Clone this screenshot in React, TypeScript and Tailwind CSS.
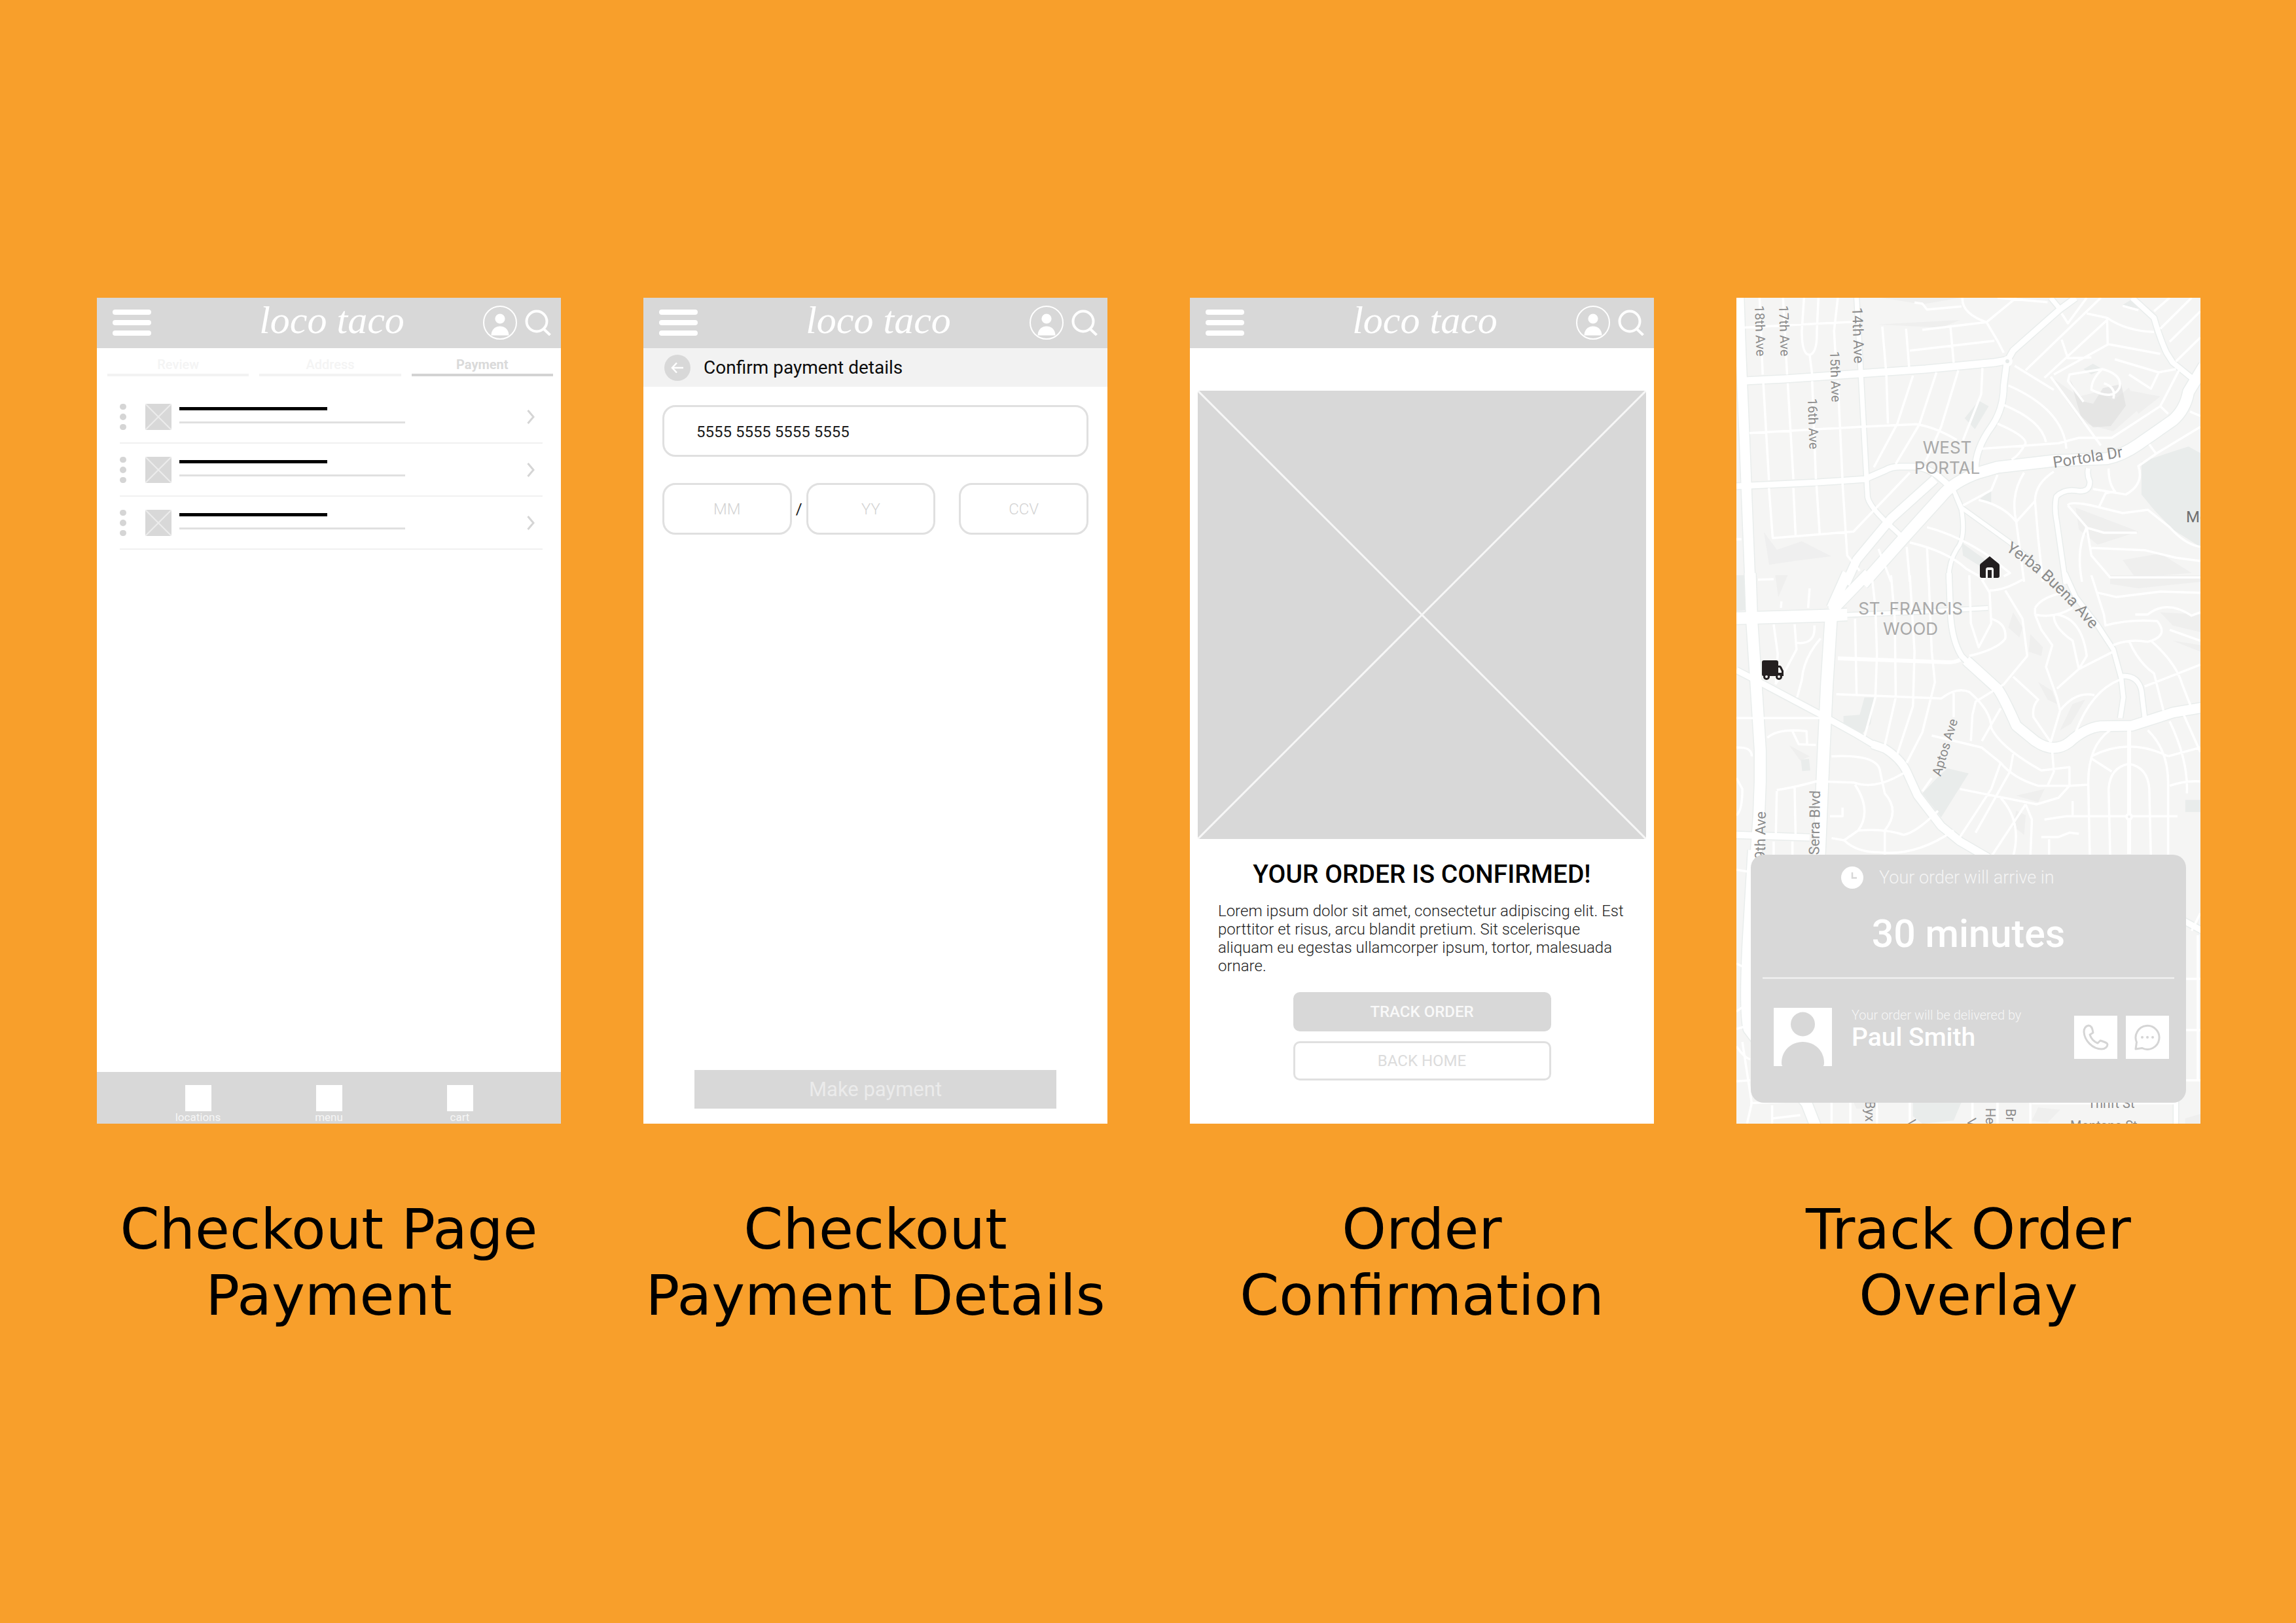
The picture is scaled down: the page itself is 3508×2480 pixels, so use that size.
import React from 'react';

/* ---------- shared pieces ---------- */

function UserIcon() {
  return (
    <svg viewBox="0 0 52 52" className="size-[52px]" aria-hidden="true">
      <circle cx="26" cy="26" r="25" fill="none" stroke="#fff" strokeWidth="2" />
      <circle cx="26" cy="20" r="7.6" fill="#fff" />
      <path d="M12.5 45.5C12.5 37 18.5 31.5 26 31.5S39.5 37 39.5 45.5Z" fill="#fff" />
    </svg>
  );
}

function SearchIcon() {
  return (
    <svg viewBox="0 0 40 40" className="size-10" fill="none" stroke="#fff" strokeWidth="4" aria-hidden="true">
      <circle cx="18" cy="18" r="15.5" />
      <path d="M28 29L38.500 39" />
    </svg>
  );
}

function Header() {
  return (
    <header className="grid h-[77px] shrink-0 grid-cols-[1fr_auto_1fr] items-center bg-[#d8d8d8] pl-6 pr-[15px] pb-0.5">
      <button aria-label="Open menu" className="flex w-[59px] flex-col gap-2">
        <span className="h-2 w-full rounded-sm bg-white" />
        <span className="h-2 w-full rounded-sm bg-white" />
        <span className="h-2 w-full rounded-sm bg-white" />
      </button>
      <a
        href="#home"
        className="self-start font-['Liberation_Serif',serif] text-[60px] leading-[68px] text-white italic"
      >
        loco taco
      </a>
      <div className="flex items-center gap-3 justify-self-end">
        <button aria-label="Account">
          <UserIcon />
        </button>
        <button aria-label="Search">
          <SearchIcon />
        </button>
      </div>
    </header>
  );
}

function Phone({ children, caption }: { children: React.ReactNode; caption: [string, string] }) {
  return (
    <figure className="min-w-0 flex-1">
      <div className="relative flex aspect-[709/1262] w-full flex-col overflow-hidden bg-white font-[Roboto,sans-serif]">
        {children}
      </div>
      <figcaption className="mt-[111px] text-center font-['DejaVu_Sans',sans-serif] text-[86px] leading-[101px] whitespace-nowrap text-black">
        {caption[0]}
        <br />
        {caption[1]}
      </figcaption>
    </figure>
  );
}

function Crossed({ stroke, width }: { stroke: string; width: number }) {
  return (
    <svg viewBox="0 0 100 100" preserveAspectRatio="none" className="size-full bg-[#d8d8d8]" aria-hidden="true">
      <path d="M0 0L100 100M100 0L0 100" stroke={stroke} strokeWidth={width} vectorEffect="non-scaling-stroke" />
    </svg>
  );
}

/* ---------- screen 1: payment methods ---------- */

function PaymentRow() {
  return (
    <li className="flex h-[81px] items-start border-b-2 border-[#f0f0f0] pt-5">
      <button aria-label="Options" className="flex h-10 flex-col items-center justify-center gap-1.5">
        <span className="size-2.5 rounded-full bg-[#d5d5d5]" />
        <span className="size-2.5 rounded-full bg-[#d5d5d5]" />
        <span className="size-2.5 rounded-full bg-[#d5d5d5]" />
      </button>
      <div className="ml-[29px] size-10">
        <Crossed stroke="#ececec" width={2} />
      </div>
      <div className="ml-3 flex flex-1 flex-col gap-[17px] pt-[5px]">
        <div className="h-[5px] w-[226px] bg-black" />
        <div className="h-[3px] w-[345px] bg-[#e0e0e0]" />
      </div>
      <button aria-label="Open" className="mr-3 pt-[9px]">
        <svg viewBox="0 0 12 22" className="h-[22px] w-3" fill="none" stroke="#d5d5d5" strokeWidth="3" aria-hidden="true">
          <path d="M1.500 1L10 11L1.500 21" />
        </svg>
      </button>
    </li>
  );
}

function PaymentScreen() {
  return (
    <>
      <Header />
      <nav className="grid grid-cols-3 gap-4 pt-[11px] pr-3 pl-4 text-center text-xl leading-7 font-bold">
        <a href="#review" className="border-b-4 border-[#f3f3f3] font-medium text-[#f4f4f4]">Review</a>
        <a href="#address" className="border-b-4 border-[#f3f3f3] font-medium text-[#f4f4f4]">Address</a>
        <a href="#payment" className="border-b-4 border-[#d3d3d3] text-[#dadada]">Payment</a>
      </nav>
      <ul className="mt-[22px] flex-1 pr-7 pl-[35px]">
        <PaymentRow />
        <PaymentRow />
        <PaymentRow />
      </ul>
      <nav className="flex h-[79px] shrink-0 justify-center bg-[#d8d8d8] pt-5">
        {['locations', 'menu', 'cart'].map((label) => (
          <a key={label} href={'#' + label} className="flex w-[200px] flex-col items-center text-[17px] leading-[19px] text-[#f6f6f6]">
            <span className="size-10 shrink-0 bg-white" />
            {label}
          </a>
        ))}
      </nav>
    </>
  );
}

/* ---------- screen 2: card details ---------- */

function DetailsScreen() {
  const small =
    'h-[79px] w-full min-w-0 flex-1 rounded-[20px] border-[3px] border-[#e0e0e0] bg-white text-center text-2xl font-light text-[#1c1c1c] placeholder:text-[#d3d3d3]';
  return (
    <>
      <Header />
      <div className="flex h-[59px] shrink-0 items-center gap-5 bg-[#f2f2f2] pl-8">
        <button aria-label="Back" className="flex size-10 items-center justify-center rounded-full bg-[#d8d8d8]">
          <svg viewBox="0 0 20 18" className="h-[18px] w-5" fill="none" stroke="#fff" strokeWidth="2.500" aria-hidden="true">
            <path d="M19 9H3M9 1.500L2 9L9 16.500" />
          </svg>
        </button>
        <h2 className="text-[28px] leading-8 text-[#0c0c0c]">Confirm payment details</h2>
      </div>
      <form className="flex flex-1 flex-col px-[29px] pt-7 pb-[23px]">
        <input
          aria-label="Card number"
          defaultValue="5555 5555 5555 5555"
          className="h-[79px] w-full rounded-[20px] border-[3px] border-[#e0e0e0] bg-white pt-0.5 pl-[49px] text-2xl text-[#1c1c1c]"
        />
        <div className="mt-10 flex items-center">
          <input aria-label="Expiry month" placeholder="MM" className={small} />
          <span className="w-[22px] text-center text-2xl text-[#1c1c1c]">/</span>
          <input aria-label="Expiry year" placeholder="YY" className={small} />
          <span className="w-9" />
          <input aria-label="CCV" placeholder="CCV" className={small} />
        </div>
        <button type="button" className="mt-auto h-[59px] w-[553px] self-center bg-[#d8d8d8] text-[31px] leading-[59px] text-[#ebebeb]">
          Make payment
        </button>
      </form>
    </>
  );
}

/* ---------- screen 3: confirmation ---------- */

function ConfirmedScreen() {
  return (
    <>
      <Header />
      <div className="mx-3 mt-[65px] aspect-square">
        <Crossed stroke="#f7f7f7" width={3} />
      </div>
      <h2 className="mt-[30px] text-center text-[39px] leading-[48px] font-medium text-black">YOUR ORDER IS CONFIRMED!</h2>
      <p className="mt-[18px] mr-10 ml-[43px] text-2xl leading-7 font-light text-[#222]">
        Lorem ipsum dolor sit amet, consectetur adipiscing elit. Est porttitor et risus, arcu blandit pretium. Sit
        scelerisque aliquam eu egestas ullamcorper ipsum, tortor, malesuada ornare.
      </p>
      <button className="mt-[26px] h-[60px] w-[394px] self-center rounded-[10px] bg-[#d8d8d8] text-2xl font-medium text-[#f9f9f9]">
        TRACK ORDER
      </button>
      <button className="mt-[15px] h-[60px] w-[394px] self-center rounded-[10px] border-[3px] border-[#e0e0e0] text-2xl text-[#dcdcdc]">
        BACK HOME
      </button>
    </>
  );
}

/* ---------- screen 4: map ---------- */

type Road = [string, number];

/* The map is drawn in three stacked tiles; each has its own drawing units. */
const tiles: { at: string; major: Road[]; minor: string; park: string; hill: string }[] = [
  {
    at: 'translate(-22 -16) scale(.4783 .3333)',
    major: [
      ['M54 48L60 300L72 700L80 1000L90 1360', 15],
      ['M60 430L200 420L400 400L650 375L870 345L910 335', 11],
      ['M430 48L440 300L455 700L465 960Q470 1000 520 1070L580 1150', 7],
      ['M46 912L300 895L455 880L520 840Q540 822 570 822L620 822Q660 830 690 865L730 915', 9],
      ['M450 1360L580 1150L700 960Q740 890 820 850L880 825L1060 795L1230 785Q1280 770 1330 720L1440 610Q1480 560 1490 480L1540 360', 17],
      ['M395 1360L430 1250L540 1060L680 880', 13],
      ['M1130 48L1080 100L930 290L910 340L900 450Q900 560 860 640Q810 740 810 830', 9],
      ['M1050 48L1080 100', 7],
      ['M1310 48L1380 140Q1400 240 1420 300L1440 345L1500 415', 8],
      ['M1170 830Q1165 860 1175 890Q1175 945 1130 932Q1090 925 1068 960Q1060 1010 1070 1080L1098 1360', 7],
      ['M730 900L765 1010L920 1170L1000 1270', 6],
      ['M745 950L765 1020Q780 1150 750 1200Q720 1270 725 1360', 6],
    ],
    minor:
      'M120 48L130 400M132 440L150 885M150 920L162 1150M195 48L208 400M210 440L228 880M228 920L235 1135M262 48L255 200Q255 310 280 310Q305 300 303 200L308 48M280 310L288 400M288 430L300 880M302 910L312 1130M370 48L358 200L362 300M370 430L385 885M385 900L400 1230L440 1300M62 185L420 158M88 668L440 640L620 628Q680 640 750 700M160 1150L420 1120L600 850M512 180L525 400L530 625M588 190L598 370M730 185L740 345M640 195L845 160L880 245L900 300M600 290L870 245M768 48Q765 120 845 160L940 48M615 70L640 75L655 102L765 88M610 405L560 625L485 825M685 390L630 630L555 810M755 380L700 640L650 800M832 370L828 490L770 700M915 450Q1090 560 1100 740M900 540Q1020 610 1035 710M880 625Q970 680 970 715Q950 770 925 790M830 740L1075 715L1140 690L1245 690L1400 545L1425 580M1400 545L1460 380M935 360L1060 470M1050 410L1210 725M970 380L1210 48M1030 415L1230 150M1060 400L1235 260M1085 120L1105 165L1165 48M1165 120L1230 140Q1290 200 1380 205M1230 140L1232 260L1400 305M1085 240L1105 325L1180 322M1255 330L1395 390L1450 375M1395 390L1370 465L1300 400M1155 525L1105 430L1110 400L1215 375Q1280 400 1270 460Q1250 520 1180 470Q1180 420 1215 375M1220 440Q1260 460 1250 510M1280 85L1330 105M1380 110L1430 48M1400 190L1500 48M1430 250L1528 110M1450 340L1528 230M1495 570L1528 590M1528 640L1390 760L1330 820Q1350 900 1290 950L1185 925M1365 720L1385 760M1235 830Q1235 900 1255 935L1225 945L1205 1005M1105 1000Q1110 980 1180 1000L1280 1035L1360 1020L1430 1100Q1480 1180 1528 1190M1105 1000L1165 1100Q1130 1200 1150 1350M1160 1100L1220 1125L1325 1125M1180 1195L1350 1205L1450 1240L1528 1255M1165 1100L1180 1230L1240 1330L1528 1330M1060 845Q1000 900 1000 980L1010 1150L1025 1350M965 850Q920 950 940 1075L965 1350M880 860L860 930L770 1000M820 975Q900 1000 940 1075L1000 980M655 1100Q760 1140 860 1240M600 1170Q720 1210 780 1290L840 1340M860 1240L920 1310L900 1325M655 1195L660 1350M590 1190L600 1350M500 1200L540 1350M880 48L1040 68M46 1155L62 1155',
    park: 'M1340 800L1490 730L1528 760V1190L1440 1110L1380 1020L1340 950ZM820 520L852 545L808 650L775 600ZM765 1170L880 1290L860 1310L770 1230ZM860 930L860 990L820 975ZM1280 80L1310 55L1330 100ZM1185 350L1215 375L1180 400L1155 375Z',
    hill: 'M1060 420L1140 500L1200 480L1250 520L1300 460L1330 560L1250 660L1150 620L1100 520ZM1290 470L1400 500L1330 580ZM510 48L760 48L640 78ZM500 170L760 150L700 185ZM1130 1010L1330 1120L1200 1180L1140 1110ZM1280 1250L1400 1220L1500 1310L1320 1330Z',
  },
  {
    at: 'translate(-22 424) scale(.4783 .3333)',
    major: [
      ['M90 -10L95 200L108 480L122 800L122 950L118 1100L108 1300', 17],
      ['M400 -10L350 150M468 -10L350 165', 15],
      ['M46 197L330 185L400 180', 18],
      ['M390 182L600 170L850 150', 6],
      ['M350 160L335 500L325 800L310 1300', 18],
      ['M46 435L120 490L330 650L430 730L500 790', 9],
      ['M480 775L520 795Q570 840 590 900L625 1010L700 1150L760 1220L850 1295', 12],
      ['M46 1190L280 1202', 10],
      ['M725 -10L730 180Q735 300 765 370L800 420', 8],
      ['M780 390L880 520Q900 560 940 690L1000 760Q1060 820 1110 765Q1160 700 1210 692L1310 690L1440 630L1540 605', 15],
      ['M1095 -10L1130 100L1200 230L1250 340L1275 470L1282 560L1272 655', 7],
      ['M1280 462Q1330 460 1340 530L1350 650', 7],
    ],
    minor:
      'M165 225L178 360L172 500M232 225L238 340L205 430L170 500M315 290Q260 380 255 480L240 560M238 310Q300 320 295 230M190 120L188 150M280 60L275 150M115 20L165 18M425 200L430 545M480 20L490 150L495 360L490 560L455 740M540 0L552 200L555 560L520 780M600 0L615 350L610 600L560 820M660 0L670 350L680 490L640 720L590 860M365 545L700 565Q750 510 790 535Q860 620 860 700Q890 790 1020 895L1110 880L1110 965L1010 965Q930 930 890 860L830 790L670 735M740 540L740 650M790 0L795 220L820 330L860 220L855 80L830 20M855 70Q900 70 960 20M860 200Q910 220 905 290Q880 340 790 370M905 70L960 200L975 370L900 500L810 580L800 640L795 760M890 610L830 760M930 465L1010 570Q990 600 995 650L1050 765M1000 180L1020 250L1055 320L1035 420L1070 560L1080 620L1050 765M1000 180Q1060 200 1120 150M1060 185Q1060 240 1120 300L1140 430L1070 520M1000 150Q1020 100 1090 80M1000 150V180M1070 180Q1150 200 1165 370L1140 430L1250 350M1180 0L1220 180L1225 230Q1300 200 1390 210Q1430 280 1360 305Q1300 290 1250 320M1200 80L1260 100L1400 75L1528 80M1320 180L1360 180Q1420 110 1500 185L1528 170M1300 300Q1330 400 1380 450L1410 620M1370 300Q1450 400 1470 500L1500 610M1430 250L1528 300M1350 510L1528 410M1080 620Q1130 530 1190 550M1270 480Q1180 530 1130 720M1240 710Q1170 780 1170 950L1175 1290M1360 710Q1425 800 1425 950L1425 1290M1180 830Q1300 740 1425 830M1180 840L1245 900M1240 1290L1235 980Q1240 880 1300 865Q1360 880 1365 980L1370 1290M1430 670Q1490 850 1485 1000M1475 640L1528 810M1425 830L1528 790M1430 965Q1480 940 1528 945M1030 1120L1100 1105L1455 1105M1170 960L1110 965M1020 1200L1075 1200L1110 1180L1140 1185M1045 1210L1045 1290M1120 1035L1120 1100M760 980L1005 1050L1075 1020L1110 965M890 860L860 980L760 1200M930 820L920 900L810 1180M890 1020Q960 1130 930 1290M970 1050L990 1120L985 1290M1055 810L1060 900L1040 965M46 655L320 655M145 745Q180 700 270 715L272 775M225 715L245 775L300 778M46 790Q95 785 95 830M175 985Q240 970 300 945L420 950Q480 980 550 930L590 900M350 830Q500 820 505 900L520 1000Q570 1080 520 1170L520 1290M425 960Q480 1080 435 1170L390 1215M345 1105L385 1105L385 1065M350 1205L390 1215Q430 1270 500 1270Q620 1290 740 1170M435 1170Q520 1160 580 1190Q620 1180 690 1080M232 970L235 1190M175 990L172 1190M46 1100Q65 1080 65 980L46 930M640 990L670 930M165 1220L165 1290M225 1220L225 1290M860 1290L970 1050',
    park: 'M455 560L485 560L475 680L440 740L388 690V645L440 640ZM720 885L788 908L700 1110L640 1000L690 925ZM1480 1030H1528V1085H1480ZM46 0H72L75 160L46 165ZM252 845L278 842L282 895L256 898Z',
    hill: 'M1240 0L1528 0V30L1330 60L1240 40ZM930 170L960 240L950 285L915 240ZM985 270L1025 330L1020 370L980 350ZM1010 490L1055 530L1070 590L1040 570ZM1400 170L1528 180V260L1440 230ZM1440 300L1528 320V350ZM1120 590L1160 570L1115 680L1080 710ZM940 1080L970 1100L965 1190L930 1150ZM940 1010L1030 980L1010 1040ZM215 780L280 830L250 850ZM170 0H210L180 100Z',
  },
  {
    at: 'translate(-22 824) scale(.4783 .3333)',
    major: [
      ['M100 60L82 500Q72 800 85 880L200 1100L270 1220L300 1330', 16],
      ['M1470 380L1535 430', 9],
      ['M1450 1200V1330', 7],
    ],
    minor:
      'M46 150L88 160M46 580L75 600M46 800L75 770M46 880L70 870M46 960Q70 1010 90 1020M65 940L95 1220L80 1314M46 1120L90 1115M90 1220L220 1212M160 1230V1314M160 1290L250 1275M350 1215V1314M410 1215V1314M495 1215V1314M600 1215V1314M800 1215V1314M880 1215V1314M985 1215V1314M990 1220H1450M1480 650H1528M1480 885H1528M1480 1115H1528M1520 450V1115M1528 350L1500 430',
    park: 'M610 1215H765L740 1300L640 1314L610 1280Z',
    hill: 'M420 1215H500V1245H430ZM1010 1240L1080 1250L1040 1310L990 1300ZM1480 1290L1528 1270V1314H1480Z',
  },
];

function MapCanvas() {
  return (
    <svg
      viewBox="0 0 709 1262"
      preserveAspectRatio="xMidYMid slice"
      className="absolute inset-0 size-full bg-[#f5f5f4]"
      role="img"
      aria-label="Map of the delivery route"
    >
      {tiles.map((t) => (
        <g key={t.at} transform={t.at}>
          <path d={t.park} fill="#e9eceb" />
          <path d={t.hill} fill="#ececec" opacity=".75" />
        </g>
      ))}
      <path d="M42 358L62 385L100 372L145 395L90 402L50 408Z" fill="#efefef" />
      <path d="M510 126L528 158L545 162L560 138L588 132L595 165L572 196L545 198L526 180Z" fill="#dedede" opacity=".6" />
      <g fill="none" strokeLinejoin="round" strokeLinecap="butt">
        {tiles.map((t) => (
          <g key={t.at} transform={t.at}>
            {t.major.map(([d, w]) => (
              <path key={d} d={d} stroke="#e9edec" strokeWidth={w + 3} vectorEffect="non-scaling-stroke" />
            ))}
          </g>
        ))}
        {tiles.map((t) => (
          <g key={t.at} transform={t.at} stroke="#fff">
            <path d={t.minor} strokeWidth="3.500" vectorEffect="non-scaling-stroke" />
            {t.major.map(([d, w]) => (
              <path key={d} d={d} strokeWidth={w} vectorEffect="non-scaling-stroke" />
            ))}
          </g>
        ))}
        <path d="M155 551L325 557Q335 557 342 553" stroke="#fff" strokeWidth="6" />
        <path d="M600 660V850" stroke="#fff" strokeWidth="6" />
        <circle cx="600" cy="793" r="4" stroke="#fff" strokeWidth="4" fill="#f0f0f0" />
        <circle cx="414" cy="97" r="8" fill="#fff" />
        <circle cx="414" cy="97" r="3" fill="#e7ebea" />
      </g>

      <g fontFamily="Roboto, sans-serif" fontSize="20" fill="#8b8b8b">
        <text transform="translate(28 12) rotate(88)">18th Ave</text>
        <text transform="translate(65 12) rotate(88)">17th Ave</text>
        <text transform="translate(143 82) rotate(88)">15th Ave</text>
        <text transform="translate(109 154) rotate(88)">16th Ave</text>
        <text transform="translate(177 15) rotate(88)" fontSize="22">14th Ave</text>
        <text transform="translate(312 732) rotate(-73)">Aptos Ave</text>
        <text transform="translate(45 785) rotate(-89)" fontSize="22" textAnchor="end">19th Ave</text>
        <text transform="translate(128 753) rotate(-89)" fontSize="22" textAnchor="end">Serra Blvd</text>
        <text transform="translate(485 260) rotate(-9)" fontSize="24">Portola Dr</text>
        <path id="yerba" d="M411 386Q474 426 540 504" fill="none" />
        <text fontSize="24">
          <textPath href="#yerba">Yerba Buena Ave</textPath>
        </text>
        <text x="687" y="343" fontSize="24" fill="#6f6f6f">Mo</text>
        <text transform="translate(197 1227) rotate(90)">Byx</text>
        <text transform="translate(260 1257) rotate(80)">V</text>
        <text transform="translate(352 1255) rotate(80)">V</text>
        <text transform="translate(381 1238) rotate(90)">He</text>
        <text transform="translate(412 1239) rotate(90)">Br</text>
        <text x="537" y="1238">Thrift St</text>
        <text x="510" y="1272">Montana St</text>
      </g>
      <g fontFamily="Inter, sans-serif" fontSize="26" fill="#a9a9a9" textAnchor="middle">
        <text x="322" y="238">WEST</text>
        <text x="322" y="269">PORTAL</text>
        <text x="266" y="484">ST. FRANCIS</text>
        <text x="266" y="515">WOOD</text>
      </g>

      {/* destination */}
      <g transform="translate(371 394)" fill="#231f20">
        <path d="M16 1L30 12.500Q31 13.500 31 15V31Q31 34 28 34H4Q1 34 1 31V15Q1 13.500 2 12.500Z" />
        <path d="M10 34V21.500Q10 18 13 18H19Q22 18 22 21.500V34H19V22H13V34Z" fill="#f5f5f4" />
      </g>
      {/* courier */}
      <g transform="translate(39 553)" fill="#231f20">
        <path d="M3 1H22Q25 1 25 4V9H27Q29 9 30 11L33 17V25H2Q0 25 0 22V4Q0 1 3 1Z" />
        <path d="M25 12H27L30 18V20H25Z" fill="#f5f5f4" />
        <circle cx="7" cy="26" r="5" />
        <circle cx="26" cy="26" r="5" />
        <circle cx="7" cy="26" r="2" fill="#f5f5f4" />
        <circle cx="26" cy="26" r="2" fill="#f5f5f4" />
      </g>
    </svg>
  );
}

function TrackScreen() {
  return (
    <>
      <MapCanvas />
      <section className="relative mx-[22px] mt-auto mb-8 flex h-[379px] flex-col rounded-[20px] bg-[#d8d8d8]">
        <div className="mt-[18px] flex h-[34px] items-center gap-6 pl-[138px]">
          <svg viewBox="0 0 34 34" className="size-[34px]" aria-hidden="true">
            <circle cx="17" cy="17" r="17" fill="#fff" />
            <path d="M17 9V17.500H24" fill="none" stroke="#d8d8d8" strokeWidth="2.500" />
          </svg>
          <p className="text-[27px] leading-[34px] font-light text-[#f4f4f4]">Your order will arrive in</p>
        </div>
        <p className="mt-[35px] text-center text-[59px] leading-[68px] font-medium text-white">30 minutes</p>
        <hr className="mx-[18px] mt-8 border-t-[3px] border-[#ececec]" />
        <div className="mt-11 flex items-start pr-[26px] pl-[35px]">
          <svg viewBox="0 0 89 89" className="size-[89px] bg-white" role="img" aria-label="Courier photo">
            <circle cx="44.500" cy="25" r="18.500" fill="#d8d8d8" />
            <path d="M14 89Q12 89 12 84C12 66 26 52 44.500 52S77 66 77 84Q77 89 75 89Z" fill="#d8d8d8" />
          </svg>
          <div className="ml-[30px] flex-1">
            <p className="text-xl leading-[22px] font-light text-[#f6f6f6]">Your order will be delivered by</p>
            <p className="text-[39px] leading-[46px] font-medium text-white">Paul Smith</p>
          </div>
          <div className="mt-3 flex gap-[13px]">
            <button aria-label="Call" className="flex size-[66px] items-center justify-center bg-white">
              <svg viewBox="0 0 40 40" className="size-10" fill="none" stroke="#d5d5d5" strokeWidth="3" strokeLinejoin="round" aria-hidden="true">
                <path d="M9 2C4 3 2 7 2 12C3 25 15 38 29 38C35 38 38 34 38 31C38 29 36 28 27 25L23 29C18 27 13 22 11 16L16 13C15 5 13 2 9 2Z" />
              </svg>
            </button>
            <button aria-label="Message" className="flex size-[66px] items-center justify-center bg-white">
              <svg viewBox="0 0 40 40" className="size-10" aria-hidden="true">
                <path d="M2 38L3.500 27.500A18 18 0 1 1 12 36.500Z" fill="none" stroke="#d5d5d5" strokeWidth="3" strokeLinejoin="round" />
                <circle cx="12" cy="20" r="2" fill="#d5d5d5" />
                <circle cx="20" cy="20" r="2" fill="#d5d5d5" />
                <circle cx="28" cy="20" r="2" fill="#d5d5d5" />
              </svg>
            </button>
          </div>
        </div>
      </section>
    </>
  );
}

export default function App() {
  return (
    <main className="flex min-h-screen items-start gap-[126px] bg-[#f89f2b] pt-[455px] pr-[146px] pl-[148px]">
      <Phone caption={['Checkout Page', 'Payment']}>
        <PaymentScreen />
      </Phone>
      <Phone caption={['Checkout', 'Payment Details']}>
        <DetailsScreen />
      </Phone>
      <Phone caption={['Order', 'Confirmation']}>
        <ConfirmedScreen />
      </Phone>
      <Phone caption={['Track Order', 'Overlay']}>
        <TrackScreen />
      </Phone>
    </main>
  );
}
